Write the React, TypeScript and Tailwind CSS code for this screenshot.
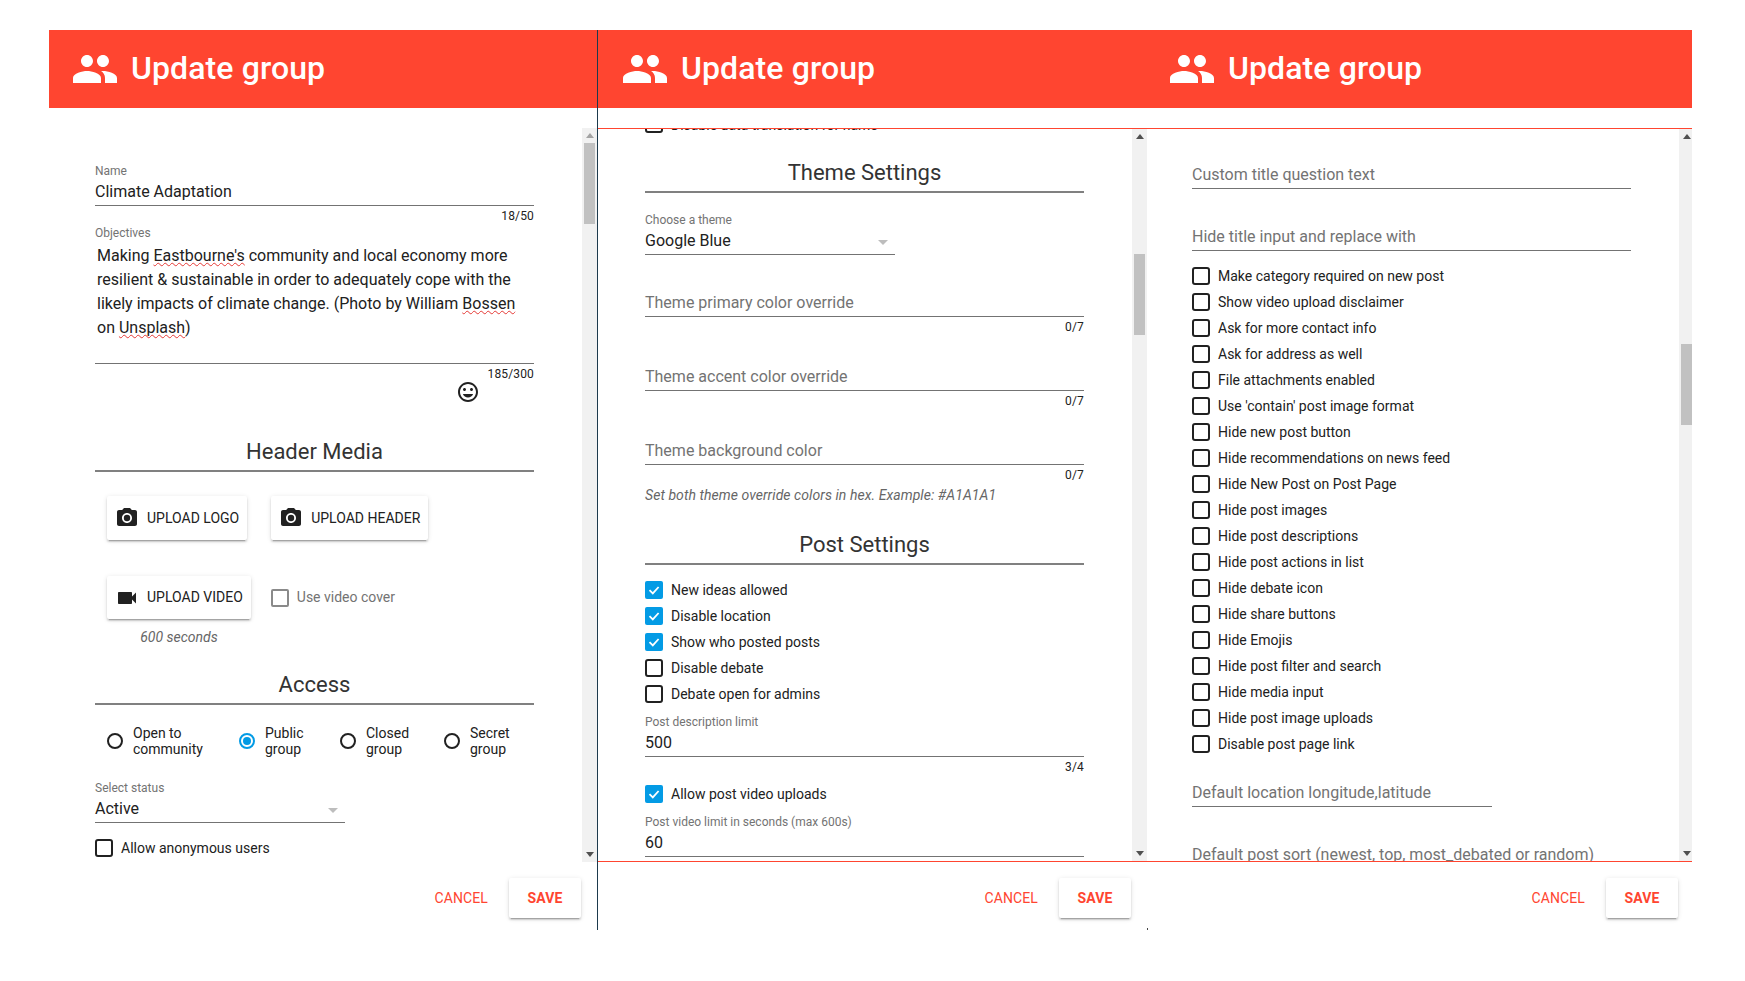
import React from "react";
import { MdPeople, MdPhotoCamera, MdVideocam, MdTagFaces } from "react-icons/md";

function Header() {
  return (
    <div className="h-[78px] shrink-0 bg-[#ff4530] flex items-center text-white">
      <MdPeople size={48} className="shrink-0" />
      <span className="ml-3 pb-[2px] text-[32px] font-medium leading-none tracking-[0.1px]">Update group</span>
    </div>
  );
}

function Scrollbar({ thumbTop, upDisabled, narrow }: { thumbTop: number; upDisabled?: boolean; narrow?: boolean }) {
  return (
    <div className={narrow ? "w-[13px] shrink-0 bg-[#f1f1f1] flex flex-col overflow-hidden" : "w-[15px] shrink-0 bg-[#f1f1f1] flex flex-col overflow-hidden"}>
      <div className="w-[15px] h-[15px] shrink-0 flex items-center justify-center">
        <svg width="8" height="5" viewBox="0 0 8 5"><path d="M4 0L8 5H0z" fill={upDisabled ? "#a3a3a3" : "#505050"} /></svg>
      </div>
      <div className="flex-1">
        <div className="ml-[2px] w-[11px] h-[81px] bg-[#c1c1c1]" style={{ marginTop: thumbTop }} />
      </div>
      <div className="w-[15px] h-[15px] shrink-0 flex items-center justify-center">
        <svg width="8" height="5" viewBox="0 0 8 5"><path d="M4 5L0 0H8z" fill="#505050" /></svg>
      </div>
    </div>
  );
}

function Footer({ narrow }: { narrow?: boolean }) {
  return (
    <div className={narrow ? "flex-1 flex justify-end items-start pt-4 pr-[14px]" : "flex-1 flex justify-end items-start pt-4 pr-4"}>
      <button className="h-10 mr-[21px] text-[14px] tracking-[0.1px] text-[#ff4530]">CANCEL</button>
      <button className="h-10 w-[72px] bg-white rounded-[2px] text-[14px] font-bold tracking-[0.1px] text-[#ff4530] shadow-[0_2px_2px_0_rgba(0,0,0,0.14),0_1px_5px_0_rgba(0,0,0,0.12),0_3px_1px_-2px_rgba(0,0,0,0.2)]">SAVE</button>
    </div>
  );
}

function Check({ label, checked, muted, low }: { label: string; checked?: boolean; muted?: boolean; low?: boolean }) {
  return (
    <div className="h-[26px] flex items-center gap-2 text-[14px]">
      {checked ? (
        <span className="w-[18px] h-[18px] rounded-[2px] bg-[#039be5] flex items-center justify-center">
          <svg width="14" height="14" viewBox="0 0 14 14" fill="none"><path d="M2.5 7.2L5.8 10.4L11.6 4" stroke="#fff" strokeWidth="1.8" /></svg>
        </span>
      ) : (
        <span className={muted ? "w-[18px] h-[18px] rounded-[2px] border-2 border-[#8a8a8a]" : "w-[18px] h-[18px] rounded-[3px] border-2 border-[#212121]"} />
      )}
      <span className={muted ? "text-[#737373]" : low ? "mt-[3px] text-[#212121]" : "text-[#212121]"}>{label}</span>
    </div>
  );
}

function Field({ label, value, placeholder, className }: { label?: string; value?: string; placeholder?: string; className?: string }) {
  return (
    <div className={className}>
      {label && <div className="h-4 text-[12px] leading-4 text-[#737373]">{label}</div>}
      <div className={value ? "h-[27px] leading-[26px] text-[16px] text-[#212121] border-b border-[#737373]" : "h-[27px] leading-[26px] text-[16px] text-[#737373] border-b border-[#737373]"}>
        {value || placeholder}
      </div>
    </div>
  );
}

function Counter({ text }: { text: string }) {
  return <div className="h-5 leading-5 text-[12px] tracking-[0.15px] text-right text-[#212121]">{text}</div>;
}

function SelectField({ label, value, className }: { label: string; value: string; className?: string }) {
  return (
    <div className={className}>
      <div className="h-4 text-[12px] leading-4 text-[#737373]">{label}</div>
      <div className="h-[27px] w-[250px] leading-[24px] text-[16px] text-[#212121] border-b border-[#737373] flex items-center justify-between pr-[7px]">
        <span>{value}</span>
        <svg width="10" height="5" viewBox="0 0 10 5" className="mt-[2px]"><path d="M0 0H10L5 5z" fill="#bdbdbd" /></svg>
      </div>
    </div>
  );
}

function Heading({ text, className }: { text: string; className?: string }) {
  return (
    <div className={className}>
      <div className="h-[39px] border-b-2 border-[#808080] text-center text-[22px] leading-[37px] text-[#333333]">{text}</div>
    </div>
  );
}

function UploadButton({ icon, label, short }: { icon: React.ReactNode; label: string; short?: boolean }) {
  return (
    <button className={short ? "h-[43px] px-2 flex items-center gap-2 bg-white rounded-[2px] text-[14px] text-[#212121] shadow-[0_2px_2px_0_rgba(0,0,0,0.14),0_1px_5px_0_rgba(0,0,0,0.12),0_3px_1px_-2px_rgba(0,0,0,0.2)]" : "h-[44px] px-2 flex items-center gap-2 bg-white rounded-[2px] text-[14px] text-[#212121] shadow-[0_2px_2px_0_rgba(0,0,0,0.14),0_1px_5px_0_rgba(0,0,0,0.12),0_3px_1px_-2px_rgba(0,0,0,0.2)]"}>
      {icon}
      <span>{label}</span>
    </button>
  );
}

function Radio({ lines, checked, className }: { lines: string[]; checked?: boolean; className: string }) {
  return (
    <div className={className}>
      {checked ? (
        <span className="w-4 h-4 shrink-0 rounded-full border-2 border-[#039be5] flex items-center justify-center">
          <span className="w-2 h-2 rounded-full bg-[#039be5]" />
        </span>
      ) : (
        <span className="w-4 h-4 shrink-0 rounded-full border-2 border-[#212121]" />
      )}
      <span className="ml-[10px] text-[14px] leading-4 text-[#212121]">
        {lines[0]}
        <br />
        {lines[1]}
      </span>
    </div>
  );
}

function SpellError({ children }: { children: React.ReactNode }) {
  return <span className="underline decoration-wavy decoration-[#e53935] decoration-1 underline-offset-1 [text-decoration-skip-ink:none]">{children}</span>;
}

function PanelOne() {
  return (
    <div className="w-[550px] h-[900px] shrink-0 flex flex-col border-r border-[#1d3a4d]">
      <div className="ml-px pl-[22px] bg-[#ff4530]"><Header /></div>
      <div className="mt-5 h-[734px] flex">
        <div className="flex-1 pl-[47px] pr-[48px] overflow-hidden">
          <Field className="mt-[35px]" label="Name" value="Climate Adaptation" />
          <Counter text="18/50" />
          <div className="h-4 text-[12px] leading-[14px] text-[#737373]">Objectives</div>
          <div className="h-[122px] pt-[2px] pl-[2px] border-b border-[#737373] text-[16px] leading-6 text-[#212121]">
            Making <SpellError>Eastbourne's</SpellError> community and local economy more resilient &amp; sustainable in order to adequately cope with the likely impacts of climate change. (Photo by William <SpellError>Bossen</SpellError> on <SpellError>Unsplash</SpellError>)
          </div>
          <Counter text="185/300" />
          <div className="flex justify-end pr-[54px] -mt-1">
            <MdTagFaces size={24} className="text-[#212121]" />
          </div>
          <Heading className="mt-[29px]" text="Header Media" />
          <div className="mt-6 ml-3 flex gap-6">
            <UploadButton icon={<MdPhotoCamera size={24} />} label="UPLOAD LOGO" />
            <UploadButton icon={<MdPhotoCamera size={24} />} label="UPLOAD HEADER" />
          </div>
          <div className="mt-9 ml-3 flex items-center gap-5">
            <UploadButton short icon={<MdVideocam size={24} />} label="UPLOAD VIDEO" />
            <Check label="Use video cover" muted />
          </div>
          <div className="ml-3 mt-[10px] w-[144px] h-4 leading-4 text-center text-[14px] italic text-[#666666]">600 seconds</div>
          <Heading className="mt-[21px]" text="Access" />
          <div className="mt-5 ml-3 flex">
            <Radio className="w-[132px] flex items-center" lines={["Open to", "community"]} />
            <Radio className="w-[101px] flex items-center" lines={["Public", "group"]} checked />
            <Radio className="w-[104px] flex items-center" lines={["Closed", "group"]} />
            <Radio className="flex items-center" lines={["Secret", "group"]} />
          </div>
          <SelectField className="mt-[23px]" label="Select status" value="Active" />
          <div className="mt-3"><Check label="Allow anonymous users" /></div>
        </div>
        <Scrollbar thumbTop={0} upDisabled />
      </div>
      <Footer />
    </div>
  );
}

function PanelTwo() {
  return (
    <div className="w-[549px] h-[900px] shrink-0 flex flex-col">
      <div className="pl-[23px] bg-[#ff4530]"><Header /></div>
      <div className="mt-5 h-[734px] flex border-y border-[#ff4530]">
        <div className="flex-1 pl-[47px] pr-[48px] overflow-hidden">
          <div className="-mt-[18px]"><Check label="Disable data translation for name" low /></div>
          <Heading className="mt-[17px]" text="Theme Settings" />
          <SelectField className="mt-[19px]" label="Choose a theme" value="Google Blue" />
          <Field className="mt-[35px]" placeholder="Theme primary color override" />
          <Counter text="0/7" />
          <Field className="mt-[27px]" placeholder="Theme accent color override" />
          <Counter text="0/7" />
          <Field className="mt-[27px]" placeholder="Theme background color" />
          <Counter text="0/7" />
          <div className="h-5 leading-5 text-[14px] italic tracking-[0.06px] text-[#666666]">Set both theme override colors in hex. Example: #A1A1A1</div>
          <Heading className="mt-[21px]" text="Post Settings" />
          <div className="mt-3">
            <Check label="New ideas allowed" checked />
            <Check label="Disable location" checked />
            <Check label="Show who posted posts" checked />
            <Check label="Disable debate" />
            <Check label="Debate open for admins" />
          </div>
          <Field className="mt-[7px]" label="Post description limit" value="500" />
          <Counter text="3/4" />
          <div className="mt-1"><Check label="Allow post video uploads" checked /></div>
          <Field className="mt-[7px]" label="Post video limit in seconds (max 600s)" value="60" />
        </div>
        <Scrollbar thumbTop={110} />
      </div>
      <Footer />
    </div>
  );
}

const panelThreeChecks = [
  "Make category required on new post",
  "Show video upload disclaimer",
  "Ask for more contact info",
  "Ask for address as well",
  "File attachments enabled",
  "Use 'contain' post image format",
  "Hide new post button",
  "Hide recommendations on news feed",
  "Hide New Post on Post Page",
  "Hide post images",
  "Hide post descriptions",
  "Hide post actions in list",
  "Hide debate icon",
  "Hide share buttons",
  "Hide Emojis",
  "Hide post filter and search",
  "Hide media input",
  "Hide post image uploads",
  "Disable post page link",
];

function PanelThree() {
  return (
    <div className="relative w-[545px] h-[900px] shrink-0 flex flex-col">
      <div className="pl-[21px] bg-[#ff4530]"><Header /></div>
      <div className="mt-5 h-[734px] flex border-y border-[#ff4530]">
        <div className="flex-1 pl-[45px] pr-[48px] overflow-hidden">
          <Field className="mt-[33px]" placeholder="Custom title question text" />
          <Field className="mt-[35px]" placeholder="Hide title input and replace with" />
          <div className="mt-3">
            {panelThreeChecks.map((c) => (
              <Check key={c} label={c} />
            ))}
          </div>
          <Field className="mt-[23px] w-[300px]" placeholder="Default location longitude,latitude" />
          <Field className="mt-[35px]" placeholder="Default post sort (newest, top, most_debated or random)" />
        </div>
        <Scrollbar thumbTop={200} narrow />
      </div>
      <Footer narrow />
      <span className="absolute left-0 bottom-0 w-px h-[2px] bg-[#444444]" />
    </div>
  );
}

export default function App() {
  return (
    <div className="w-[1745px] h-[981px] bg-white pt-[30px] pl-12 flex font-[Roboto,sans-serif] overflow-hidden">
      <PanelOne />
      <PanelTwo />
      <PanelThree />
    </div>
  );
}
